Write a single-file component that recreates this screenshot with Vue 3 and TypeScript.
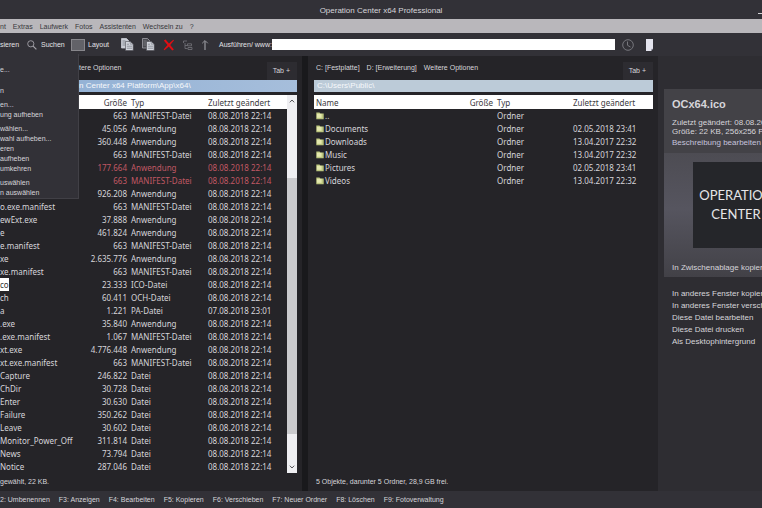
<script setup lang="ts">
import { ref } from 'vue'

interface FileRow {
  name: string
  size: string
  type: string
  date: string
  state?: 'marked' | 'selected'
}

const menus: string[] = ['nt', 'Extras', 'Laufwerk', 'Fotos', 'Assistenten', 'Wechseln zu', '?']
const command = ref('')

const d = '08.08.2018 22:14'
const row = (name: string, size: string, type: string, date = d, state?: FileRow['state']): FileRow => ({
  name, size, type, date, state,
})

const leftFiles: FileRow[] = [
  row('', '663', 'MANIFEST-Datei'),
  row('', '45.056', 'Anwendung'),
  row('', '360.448', 'Anwendung'),
  row('', '663', 'MANIFEST-Datei'),
  row('', '177.664', 'Anwendung', d, 'marked'),
  row('', '663', 'MANIFEST-Datei', d, 'marked'),
  row('', '926.208', 'Anwendung'),
  row('o.exe.manifest', '663', 'MANIFEST-Datei'),
  row('ewExt.exe', '37.888', 'Anwendung'),
  row('e', '461.824', 'Anwendung'),
  row('e.manifest', '663', 'MANIFEST-Datei'),
  row('xe', '2.635.776', 'Anwendung'),
  row('xe.manifest', '663', 'MANIFEST-Datei'),
  row('co', '23.333', 'ICO-Datei', d, 'selected'),
  row('ch', '60.411', 'OCH-Datei'),
  row('a', '1.221', 'PA-Datei', '07.08.2018 23:01'),
  row('.exe', '35.840', 'Anwendung'),
  row('.exe.manifest', '1.067', 'MANIFEST-Datei'),
  row('xt.exe', '4.776.448', 'Anwendung'),
  row('xt.exe.manifest', '663', 'MANIFEST-Datei'),
  row('Capture', '246.822', 'Datei'),
  row('ChDir', '30.728', 'Datei'),
  row('Enter', '30.630', 'Datei'),
  row('Failure', '350.262', 'Datei'),
  row('Leave', '30.602', 'Datei'),
  row('Monitor_Power_Off', '311.814', 'Datei'),
  row('News', '73.794', 'Datei'),
  row('Notice', '287.046', 'Datei'),
]

const rightFiles: FileRow[] = [
  row('..', '', 'Ordner', ''),
  row('Documents', '', 'Ordner', '02.05.2018 23:41'),
  row('Downloads', '', 'Ordner', '13.04.2017 22:32'),
  row('Music', '', 'Ordner', '13.04.2017 22:32'),
  row('Pictures', '', 'Ordner', '02.05.2018 23:41'),
  row('Videos', '', 'Ordner', '13.04.2017 22:32'),
]

const menuGroups: string[][] = [
  ['e...'],
  ['n'],
  ['en...', 'ung aufheben'],
  ['wählen...', 'wahl aufheben...', 'eren', 'aufheben', 'umkehren'],
  ['uswählen', 'n auswählen'],
]

const fileActions: string[] = [
  'In anderes Fenster kopieren',
  'In anderes Fenster verschieben',
  'Diese Datei bearbeiten',
  'Diese Datei drucken',
  'Als Desktophintergrund',
]

const functionKeys: string[] = [
  '2: Umbenennen', 'F3: Anzeigen', 'F4: Bearbeiten', 'F5: Kopieren',
  'F6: Verschieben', 'F7: Neuer Ordner', 'F8: Löschen', 'F9: Fotoverwaltung',
]
</script>

<template>
  <div class="window">
    <header class="titlebar">
      <h1>Operation Center x64 Professional</h1>
      <button class="minimize" aria-label="Minimieren"></button>
    </header>

    <nav class="menubar">
      <button v-for="m in menus" :key="m">{{ m }}</button>
    </nav>

    <div class="toolbar">
      <button class="tool first">sieren</button>
      <button class="tool search">
        <svg width="10" height="10" viewBox="0 0 10 10" fill="none" stroke="#a3a2a8">
          <circle cx="3.8" cy="3.8" r="3.1" stroke-width="0.9" />
          <path d="M6.1 6.1 9.4 9.4" stroke-width="1.2" />
        </svg>
        Suchen
      </button>
      <button class="tool layout">
        <svg width="14" height="12" viewBox="0 0 14 12">
          <rect x="0.5" y="0.5" width="13" height="11" fill="#626268" stroke="#88878c" />
        </svg>
        Layout
      </button>
      <div class="icons">
        <button v-for="n in 2" :key="n" :aria-label="n === 1 ? 'Kopieren' : 'Verschieben'">
          <svg width="13" height="13" viewBox="0 0 13 13">
            <path d="M.5.5h5l2 2v7.500h-7z" :fill="n === 1 ? '#c9ccd4' : '#4c4c52'" :stroke="n === 1 ? '#c9ccd4' : '#a0a0a6'" stroke-width=".8" />
            <path d="M1.500 3h3M1.500 5h2.500M1.500 7h2.500" :stroke="n === 1 ? '#6c7078' : '#8a8a90'" stroke-width=".7" />
            <path d="M4.500 3.500h4.700l3 2.700v6.300H4.500z" fill="#d3d6dd" stroke="#4a4a51" stroke-width=".6" />
            <path d="M9.200 3.500v2.700h3" fill="none" stroke="#777b84" stroke-width=".6" />
            <path d="M5.800 6.200h2.200M5.800 8.200h5.200M5.800 10.200h5.200" stroke="#7d818a" stroke-width=".8" />
          </svg>
        </button>
        <button aria-label="Löschen">
          <svg width="12" height="12" viewBox="0 0 12 12" fill="#e20d12">
            <path d="M.8 1.500 2.600.4 6 4.500 10.300.7l.8.6L7.200 6l3.700 4.600-1.700.9L5.800 7.600 1.500 11.300l-.9-.8L4.500 6z" />
          </svg>
        </button>
        <button aria-label="Baumansicht">
          <svg width="10" height="12" viewBox="0 0 10 12" fill="none" stroke="#75757b" stroke-width=".8">
            <path d="M.5 2h3.500M.5 2v2M2 4v5.500h2.500M2 6.500h2.500" />
            <path d="M4.500 4.800h4v2h-4zM5 8.500h4v2H5z" />
          </svg>
        </button>
        <button aria-label="Nach oben">
          <svg width="8" height="12" viewBox="0 0 8 12" fill="none" stroke="#929298">
            <path d="M4 11V2" stroke-width="1.300" />
            <path d="M1.200 4.300 4 1.500 6.800 4.300" />
          </svg>
        </button>
      </div>
      <label for="command">Ausführen/ www:</label>
      <input id="command" v-model="command" type="text" />
      <div class="tool-end">
        <button aria-label="Verlauf">
          <svg width="12" height="12" viewBox="0 0 12 12" fill="none" stroke="#77777d">
            <circle cx="6" cy="6" r="5.300" />
            <path d="M5.500 2.500v3.800l3 1.700" />
          </svg>
        </button>
        <button aria-label="Neues Dokument">
          <svg width="7" height="12" viewBox="0 0 7 12">
            <path d="M0 0h7v9.500L5 12H0z" fill="#e4e4ee" />
            <path d="M7 9.500 5 12V10z" fill="#a9a9b8" />
          </svg>
        </button>
      </div>
    </div>

    <main class="workspace">
      <section class="pane left">
        <div class="pane-head">
          <button class="option">tere Optionen</button>
          <button class="tab">Tab +</button>
        </div>
        <div class="path">n Center x64 Platform\App\x64\</div>
        <div class="list">
          <table>
            <colgroup><col /><col class="size" /><col class="type" /><col class="date" /></colgroup>
            <thead>
              <tr><th></th><th class="num">Größe</th><th>Typ</th><th>Zuletzt geändert</th></tr>
            </thead>
            <tbody>
              <tr v-for="(f, i) in leftFiles" :key="i" :class="f.state">
                <td><span class="name">{{ f.name }}</span></td>
                <td class="num">{{ f.size }}</td>
                <td>{{ f.type }}</td>
                <td>{{ f.date }}</td>
              </tr>
            </tbody>
          </table>
          <div class="scrollbar">
            <button aria-label="Nach oben blättern">
              <svg width="6" height="4" viewBox="0 0 6 4" fill="none" stroke="#55555a"><path d="M.8 3.300 3 1l2.200 2.300" /></svg>
            </button>
            <div class="track"><div class="thumb"></div></div>
            <button aria-label="Nach unten blättern">
              <svg width="6" height="4" viewBox="0 0 6 4" fill="none" stroke="#55555a"><path d="M.8.700 3 3 5.200.7" /></svg>
            </button>
          </div>
        </div>
        <p class="summary">gewählt, 22 KB.</p>
      </section>

      <div class="divider"></div>

      <section class="pane right">
        <div class="pane-head">
          <button class="option">C: [Festplatte]</button>
          <button class="option">D: [Erweiterung]</button>
          <button class="option">Weitere Optionen</button>
          <button class="tab">Tab +</button>
        </div>
        <div class="path">C:\Users\Public\</div>
        <div class="list">
          <table>
            <colgroup><col /><col class="size" /><col class="type" /><col class="date" /></colgroup>
            <thead>
              <tr><th>Name</th><th class="num">Größe</th><th>Typ</th><th>Zuletzt geändert</th></tr>
            </thead>
            <tbody>
              <tr v-for="f in rightFiles" :key="f.name">
                <td>
                  <span class="folder">
                    <svg width="8" height="8" viewBox="0 0 8 8">
                      <path d="M.3.600h3.200l.8.900h3.400v5.800H.3z" fill="#bcc67e" />
                      <path d="M.9 1.800h4.700v4H.9z" fill="#e4e8ae" />
                    </svg>
                    {{ f.name }}
                  </span>
                </td>
                <td class="num">{{ f.size }}</td>
                <td>{{ f.type }}</td>
                <td>{{ f.date }}</td>
              </tr>
            </tbody>
          </table>
        </div>
        <p class="summary">5 Objekte, darunter 5 Ordner, 28,9 GB frei.</p>
      </section>

      <aside class="details">
        <div class="card">
          <div class="card-head">
            <h2>OCx64.ico</h2>
            <p>Zuletzt geändert: 08.08.2018</p>
            <p>Größe: 22 KB, 256x256 Pixel</p>
            <button>Beschreibung bearbeiten</button>
          </div>
          <div class="card-body">
            <div class="preview"><span>OPERATION</span><span>CENTER</span></div>
            <button>In Zwischenablage kopieren</button>
          </div>
        </div>
        <div class="actions">
          <button v-for="a in fileActions" :key="a">{{ a }}</button>
        </div>
      </aside>
    </main>

    <footer class="keys">
      <button v-for="k in functionKeys" :key="k">{{ k }}</button>
    </footer>

    <div class="dropdown" role="menu">
      <div v-for="(g, i) in menuGroups" :key="i" class="group">
        <button v-for="item in g" :key="item" role="menuitem">{{ item }}</button>
      </div>
    </div>
  </div>
</template>

<style>
body {
  background: #2e2d32;
}
</style>

<style scoped>
.window {
  position: relative;
  display: flex;
  flex-direction: column;
  min-height: 100vh;
  overflow: hidden;
  background: #2e2d32;
  color: #d6d5da;
  font: 7px/10px "Liberation Sans", sans-serif;
  white-space: nowrap;
}
.window * {
  box-sizing: border-box;
}
button {
  padding: 0;
  border: 0;
  background: none;
  color: inherit;
  font: inherit;
  text-align: left;
  white-space: nowrap;
}
svg {
  display: block;
  flex: none;
}
h1, h2, p {
  margin: 0;
  font-weight: 400;
}
.titlebar {
  display: flex;
  justify-content: center;
  align-items: center;
  height: 19px;
  position: relative;
  padding-top: 2px;
  background: #323137;
}
h1 {
  font-size: 8px;
  line-height: 10px;
}
.minimize {
  position: absolute;
  right: 0;
  top: 13px;
  width: 4px;
  height: 1px;
  background: #d0d0d4;
}
.menubar {
  display: flex;
  align-items: center;
  gap: 7px;
  height: 14px;
  padding-top: 1px;
  background: #b9b7bb;
  color: #38373b;
}
.toolbar {
  display: flex;
  align-items: center;
  height: 23px;
  color: #e2e1e6;
  background: #323137;
}
.tool {
  display: flex;
  align-items: center;
  gap: 4px;
}
.tool.first {
  width: 27px;
}
.tool.search {
  width: 44px;
}
.tool.layout {
  width: 50px;
  gap: 3px;
}
.icons {
  display: flex;
  align-items: center;
  gap: 8px;
  width: 98px;
}
label {
  width: 53px;
}
input {
  flex: 1;
  min-width: 0;
  height: 11px;
  padding: 0 3px;
  border: 0;
  border-radius: 0;
  background: #fff;
  color: #222;
  font: inherit;
}
.tool-end {
  display: flex;
  align-items: center;
  gap: 12px;
  width: 147px;
  padding-left: 7px;
}
.workspace {
  flex: 1;
  display: grid;
  grid-template-columns: minmax(0, 302fr) 6px minmax(0, 350fr) minmax(0, 104fr);
}
.pane {
  display: flex;
  flex-direction: column;
  background: #252428;
}
.pane.left {
  padding-right: 5px;
}
.pane.right {
  padding: 0 5px 0 6px;
}
.divider {
  background: #19191c;
}
.pane-head {
  display: flex;
  gap: 7px;
  height: 24px;
  padding-left: 2px;
}
.left .pane-head {
  padding-left: 79px;
}
.option {
  height: 24px;
}
.tab {
  height: 18px;
  margin: 6px 0 0 auto;
  padding: 0 7px 0 6px;
  background: #2d2c31;
}
.path {
  height: 12px;
  padding-left: 3px;
  background: #bccbd8;
  color: #f6f8fb;
  font-size: 8px;
  line-height: 12px;
}
.left .path {
  padding-left: 79px;
  background: linear-gradient(90deg, #8eaed3, #a6bedb);
}
.list {
  display: flex;
  margin-top: 3px;
}
table {
  flex: 1;
  min-width: 0;
  table-layout: fixed;
  border-collapse: collapse;
  font: 8px/13px "Noto Sans", "Open Sans", sans-serif;
}
th, td {
  height: 13px;
  padding: 0;
  text-align: left;
  font-weight: 400;
}
th {
  height: 14px;
  background: #fff;
  color: #3a393d;
}
.num {
  padding-right: 4px;
  text-align: right;
}
.size {
  width: 52px;
}
.type {
  width: 77px;
}
.date {
  width: 79px;
}
.right .type {
  width: 76px;
}
.right .date {
  width: 80px;
}
.right th:first-child, .right td:first-child {
  padding-left: 2px;
}
.marked {
  color: #c05864;
}
.name {
  display: inline-block;
  height: 13px;
  vertical-align: top;
}
.selected .name {
  background: #fff;
  color: #333;
}
.folder {
  display: flex;
  align-items: center;
  gap: 1px;
  height: 13px;
}
.scrollbar {
  display: flex;
  flex-direction: column;
  width: 10px;
  background: #efeff2;
}
.scrollbar button {
  display: flex;
  align-items: center;
  justify-content: center;
  height: 12px;
}
.track {
  flex: 1;
  padding: 71px 0 27px;
}
.thumb {
  height: 100%;
  background: #cbcbce;
}
.summary {
  margin-top: auto;
  padding: 0 0 4px 2px;
}
.left .summary {
  padding-left: 0;
}
.details {
  padding: 33px 0 0 6px;
  overflow: hidden;
}
.card {
  background: #47464c;
}
.card-head {
  height: 64px;
  padding: 8px 0 0 8px;
  background: #434247;
}
.card-head p, .card-head button, .card-body button, .actions button {
  display: block;
  font-size: 8px;
  line-height: 9px;
}
h2 {
  margin-bottom: 7px;
  font-size: 11px;
  line-height: 14px;
  font-weight: 700;
}
.card-head button {
  margin-top: 2px;
  color: #c5c2dc;
}
.card-body {
  height: 124px;
  padding: 9px 0 0 8px;
  background: linear-gradient(180deg, #4d4c53, #56555f 45%, #424147);
}
.preview {
  display: flex;
  flex-direction: column;
  align-items: center;
  justify-content: center;
  width: 86px;
  height: 86px;
  margin-left: 21px;
  background: #25262a;
  color: #e6e6e8;
  font: 400 13px/19px Lato, sans-serif;
}
.card-body button {
  margin-top: 15px;
}
.actions {
  display: flex;
  flex-direction: column;
  gap: 3px;
  padding: 12px 0 0 8px;
}
.keys {
  display: flex;
  align-items: center;
  gap: 9px;
  height: 17px;
  background: #323137;
}
.dropdown {
  position: absolute;
  left: 0;
  top: 54px;
  width: 79px;
  height: 145px;
  padding-top: 11px;
  background: #323137;
  border: solid #414046;
  border-width: 0 1px 1px 0;
}
.group {
  display: flex;
  flex-direction: column;
  margin-bottom: 4px;
}
.group:first-child {
  margin-bottom: 11px;
}
.group button {
  height: 10px;
}
</style>
